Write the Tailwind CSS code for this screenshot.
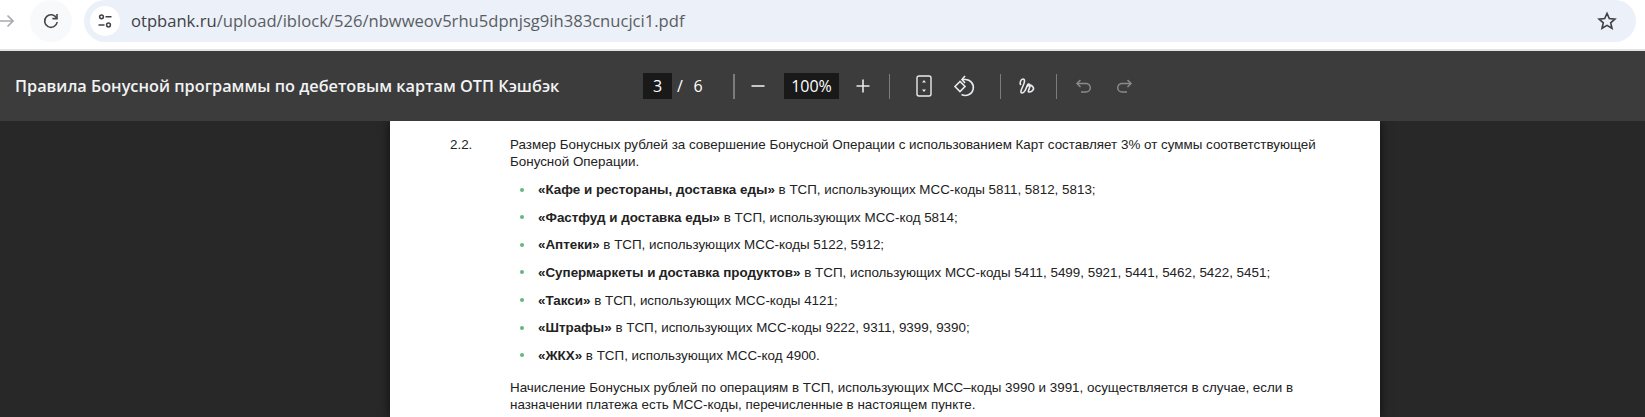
<!DOCTYPE html>
<html lang="en">
  <head>
    <meta charset="UTF-8" />
    <meta name="viewport" content="width=device-width, initial-scale=1.0" />
    <title>PDF viewer</title>
    <script src="https://cdn.jsdelivr.net/npm/@tailwindcss/browser@4"></script>
  </head>
  <body class="h-[417px] w-[1645px] overflow-hidden bg-white font-['Open_Sans',sans-serif]">
    <!-- browser bar -->
    <header class="flex h-[51px] items-start border-b-[2px] border-[#e3e3e3] bg-white">
      <svg class="mt-[13px] ml-[-2px] h-4 w-4 shrink-0" viewBox="0 0 16 16" fill="none" stroke="#a9abae" stroke-width="1.6">
        <path d="M0 8h15M9.5 2.5 15 8l-5.500 5.500" />
      </svg>
      <div class="ml-[16px] flex h-[42px] w-[42px] shrink-0 items-center justify-center rounded-full bg-[#f8f9fb]">
        <svg class="h-[18px] w-[18px]" viewBox="0 0 18 18" fill="none" stroke="#474747" stroke-width="1.6">
          <path d="M14.6 6.2A6.3 6.3 0 1 0 15.2 10" />
          <path d="M15 2v4.6h-4.6" />
        </svg>
      </div>
      <div class="ml-[12px] flex h-[42px] w-[1552px] shrink-0 items-center rounded-full bg-[#ebf0f9] pr-[19px] pl-[6px]">
        <div class="flex h-[30px] w-[30px] items-center justify-center rounded-full bg-white">
          <svg class="h-[18px] w-[18px]" viewBox="0 0 18 18" fill="none" stroke="#3f4144" stroke-width="1.5">
            <circle cx="5.500" cy="4.800" r="1.900" /><path d="M9.500 4.800h6M2.500 13h6" /><circle cx="12.500" cy="13" r="1.900" />
          </svg>
        </div>
        <span class="ml-[11px] text-[16.6px] text-[#3f4144]">otpbank.ru<span class="text-[#5a5d61]">/upload/iblock/526/nbwweov5rhu5dpnjsg9ih383cnucjci1.pdf</span></span>
        <svg class="ml-auto h-5 w-5" viewBox="0 0 20 20" fill="none" stroke="#3f4144" stroke-width="1.6">
          <path d="M10 2.400l2.300 5.200 5.600.5-4.200 3.700 1.300 5.500-5-2.900-5 2.900 1.300-5.500-4.200-3.700 5.600-.5z" />
        </svg>
      </div>
    </header>

    <!-- pdf toolbar -->
    <div class="flex h-[70px] items-center bg-[#3c3c3c] text-white">
      <h1 class="ml-[15px] w-[628px] shrink-0 text-[16.3px] font-semibold text-[#f1f3f4]">Правила Бонусной программы по дебетовым картам ОТП Кэшбэк</h1>
      <span class="flex h-[26px] w-[29px] items-center justify-center bg-[#191919] text-[16px]">3</span>
      <span class="w-[16px] text-center text-[16px]">/</span>
      <span class="w-[20px] text-center text-[16px]">6</span>
      <span class="ml-[25px] h-[25px] w-[2px] bg-[#7c7c7c]"></span>
      <svg class="ml-[15px] h-4 w-4" viewBox="0 0 16 16" stroke="#e8eaed" stroke-width="1.6"><path d="M1.500 8h13" /></svg>
      <span class="ml-[18px] flex h-[26px] w-[55px] items-center justify-center bg-[#191919] text-[16px]">100%</span>
      <svg class="ml-[16px] h-4 w-4" viewBox="0 0 16 16" stroke="#e8eaed" stroke-width="1.6"><path d="M1.500 8h13M8 1.500v13" /></svg>
      <span class="ml-[18px] h-[25px] w-[1px] bg-[#7c7c7c]"></span>
      <svg class="ml-[25px] h-[22px] w-[18px]" viewBox="0 0 18 22" fill="none" stroke="#e8eaed" stroke-width="1.4">
        <rect x="2" y="1" width="14" height="20" rx="2" />
        <path d="M9 5l-2 2.400h4zM9 17l-2-2.400h4z" fill="#e8eaed" stroke="none" />
      </svg>
      <svg class="ml-[19px] h-[24px] w-[24px]" viewBox="0 0 24 24" fill="none" stroke="#e8eaed" stroke-width="1.6">
        <path d="M8 7.500 3 12.500l5 5 5-5z" />
        <path d="M10 5.500h3a8 8 0 1 1-3.500 15" />
        <path d="M13 2l-3 3.500 3 3.500" />
      </svg>
      <span class="ml-[24px] h-[25px] w-[1px] bg-[#7c7c7c]"></span>
      <svg class="ml-[17px] h-[22px] w-[20px]" viewBox="0 0 20 22" fill="none" stroke="#e8eaed" stroke-width="1.6">
        <path d="M3 10c-2-2 0-6 2-6s2 3 0 7-3 7-1 7 4-4 5-7 3-2 3 0-3 6-1 6 6-2 4-5-5-2-6 0" />
      </svg>
      <span class="ml-[18px] h-[25px] w-[1px] bg-[#7c7c7c]"></span>
      <svg class="ml-[18px] h-[18px] w-[18px]" viewBox="0 0 18 18" fill="none" stroke="#8a8a8a" stroke-width="1.5">
        <path d="M5.500 3 2 6.500 5.500 10M2 6.500h9a4.200 4.200 0 0 1 0 8.500H6" />
      </svg>
      <svg class="ml-[22px] h-[18px] w-[18px]" viewBox="0 0 18 18" fill="none" stroke="#8a8a8a" stroke-width="1.5">
        <path d="M12.500 3 16 6.500 12.500 10M16 6.500H7a4.200 4.200 0 0 0 0 8.500h5" />
      </svg>
    </div>

    <!-- pdf canvas -->
    <main class="h-[296px] overflow-hidden bg-[#282828]">
      <article class="ml-[390px] h-full w-[990px] bg-white pt-[15px] pl-[60px] font-['Liberation_Sans',sans-serif] text-[13.4px] leading-[17px] text-[#222222] shadow-[0_0_10px_rgba(0,0,0,0.7)]">
        <div class="flex">
          <span class="w-[60px] shrink-0">2.2.</span>
          <p class="w-[815px]">Размер Бонусных рублей за совершение Бонусной Операции с использованием Карт составляет 3% от суммы соответствующей Бонусной Операции.</p>
        </div>
        <ul class="mt-[11px] ml-[60px] flex flex-col gap-[10.67px]">
          <li class="flex items-center"><span class="mr-[14px] ml-[10px] h-[4px] w-[4px] rounded-full bg-[#65b77c]"></span><span><b>«Кафе и рестораны, доставка еды»</b> в ТСП, использующих МСС-коды 5811, 5812, 5813;</span></li>
          <li class="flex items-center"><span class="mr-[14px] ml-[10px] h-[4px] w-[4px] rounded-full bg-[#65b77c]"></span><span><b>«Фастфуд и доставка еды»</b> в ТСП, использующих МСС-код 5814;</span></li>
          <li class="flex items-center"><span class="mr-[14px] ml-[10px] h-[4px] w-[4px] rounded-full bg-[#65b77c]"></span><span><b>«Аптеки»</b> в ТСП, использующих МСС-коды 5122, 5912;</span></li>
          <li class="flex items-center"><span class="mr-[14px] ml-[10px] h-[4px] w-[4px] rounded-full bg-[#65b77c]"></span><span><b>«Супермаркеты и доставка продуктов»</b> в ТСП, использующих МСС-коды 5411, 5499, 5921, 5441, 5462, 5422, 5451;</span></li>
          <li class="flex items-center"><span class="mr-[14px] ml-[10px] h-[4px] w-[4px] rounded-full bg-[#65b77c]"></span><span><b>«Такси»</b> в ТСП, использующих МСС-коды 4121;</span></li>
          <li class="flex items-center"><span class="mr-[14px] ml-[10px] h-[4px] w-[4px] rounded-full bg-[#65b77c]"></span><span><b>«Штрафы»</b> в ТСП, использующих МСС-коды 9222, 9311, 9399, 9390;</span></li>
          <li class="flex items-center"><span class="mr-[14px] ml-[10px] h-[4px] w-[4px] rounded-full bg-[#65b77c]"></span><span><b>«ЖКХ»</b> в ТСП, использующих МСС-код 4900.</span></li>
        </ul>
        <p class="mt-[15px] ml-[60px] w-[815px] leading-[17.5px]">Начисление Бонусных рублей по операциям в ТСП, использующих МСС–коды 3990 и 3991, осуществляется в случае, если в назначении платежа есть МСС-коды, перечисленные в настоящем пункте.</p>
      </article>
    </main>
  </body>
</html>
